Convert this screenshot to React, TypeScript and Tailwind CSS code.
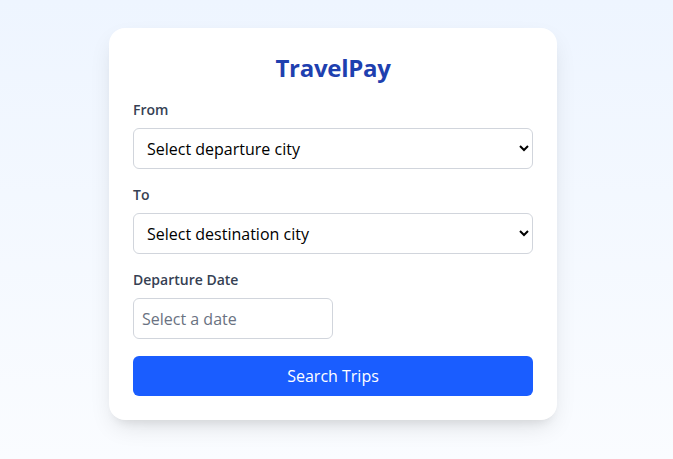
export default function App() {
  return (
    <div
      className="flex min-h-screen justify-center bg-gradient-to-b from-[#eef5ff] to-[#fafcff] pl-4 pr-[23px] pt-[28px]"
      style={{ fontFamily: '"Open Sans", "Noto Sans", sans-serif' }}
    >
      <div className="h-fit w-full max-w-md rounded-2xl bg-white p-6 shadow-[0_10px_25px_-5px_rgba(0,0,0,0.12),0_8px_10px_-6px_rgba(0,0,0,0.08)]">
        <h1 className="mb-4 text-center text-2xl font-bold tracking-[-0.3px] text-[#1e40af]">TravelPay</h1>

        <div className="mb-4">
          <label className="mb-2 block text-sm font-semibold text-gray-700">From</label>
          <select className="h-[41px] w-full rounded-md border border-gray-300 bg-white px-[9px] text-base text-black">
            <option>Select departure city</option>
          </select>
        </div>

        <div className="mb-4">
          <label className="mb-2 block text-sm font-semibold text-gray-700">To</label>
          <select className="h-[41px] w-full rounded-md border border-gray-300 bg-white px-[9px] text-base text-black">
            <option>Select destination city</option>
          </select>
        </div>

        <div className="mb-[17px]">
          <label className="mb-2 block text-sm font-semibold text-gray-700">Departure Date</label>
          <input
            type="text"
            placeholder="Select a date"
            className="h-[41px] w-1/2 rounded-md border border-gray-300 px-2 text-base text-black placeholder:text-gray-500"
          />
        </div>

        <button className="h-10 w-full rounded-md bg-[#1a5dff] text-base text-white">
          Search Trips
        </button>
      </div>
    </div>
  );
}
